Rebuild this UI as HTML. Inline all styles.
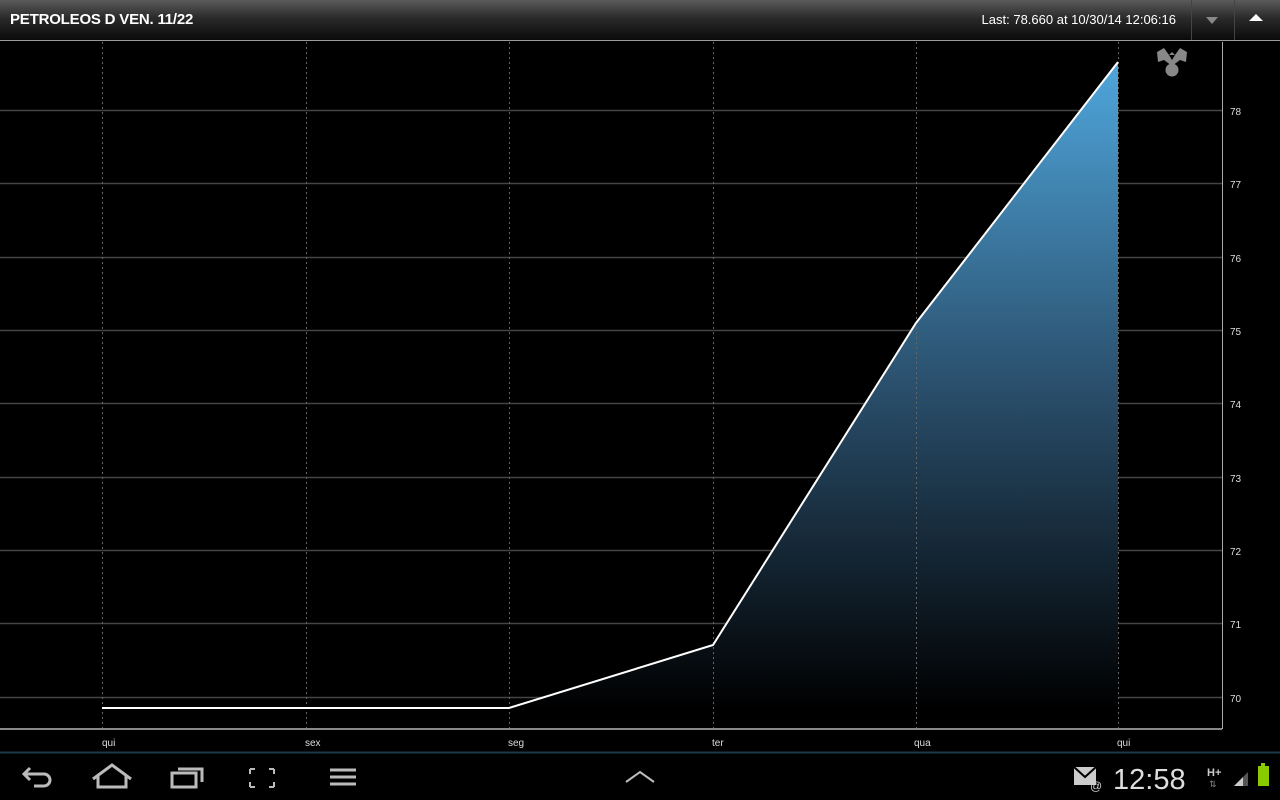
<!DOCTYPE html>
<html><head><style>
body{margin:0;width:1280px;height:800px;background:#000;overflow:hidden;font-family:"Liberation Sans",sans-serif;}
.hdr{position:absolute;left:0;top:0;width:1280px;height:40px;background:linear-gradient(#5a5a5a,#2a2a2a 45%,#0a0a0a);border-bottom:1px solid #9a9a9a;}
.t{position:absolute;left:10px;top:11px;color:#fff;font-size:15px;font-weight:bold;letter-spacing:-0.2px}
.l{position:absolute;right:104px;top:12px;color:#fff;font-size:13px}
.sep{position:absolute;top:0;width:1px;height:40px;background:#444}
</style></head><body>
<div class="hdr"><div class="t">PETROLEOS D VEN. 11/22</div><div class="l">Last: 78.660 at 10/30/14 12:06:16</div>
<div class="sep" style="left:1191px"></div><div class="sep" style="left:1234px"></div>
<svg style="position:absolute;left:1204px;top:15px" width="16" height="10"><path d="M2 2h12l-6 7z" fill="#888"/></svg>
<svg style="position:absolute;left:1248px;top:13px" width="16" height="10"><path d="M1 8h14l-7-7z" fill="#fff"/></svg>
</div>
<svg style="position:absolute;left:0;top:41px" width="1280" height="759" viewBox="0 41 1280 759">
<defs><linearGradient id="g" gradientUnits="userSpaceOnUse" x1="0" y1="62" x2="0" y2="710"><stop offset="0" stop-color="#4fa6dc"/><stop offset="0.5" stop-color="#2a4f6c"/><stop offset="1" stop-color="#000"/></linearGradient></defs>
<g stroke="#444" stroke-width="1.5">
<line x1="0" y1="110.5" x2="1222" y2="110.5"/><line x1="0" y1="183.5" x2="1222" y2="183.5"/><line x1="0" y1="257.5" x2="1222" y2="257.5"/><line x1="0" y1="330.5" x2="1222" y2="330.5"/><line x1="0" y1="403.5" x2="1222" y2="403.5"/><line x1="0" y1="477.5" x2="1222" y2="477.5"/><line x1="0" y1="550.5" x2="1222" y2="550.5"/><line x1="0" y1="623.5" x2="1222" y2="623.5"/><line x1="0" y1="697.5" x2="1222" y2="697.5"/>
</g>
<path d="M509 708L713 645L916 323L1118 62L1118 729L509 729Z" fill="url(#g)"/>
<g stroke="#666" stroke-dasharray="2,3">
<line x1="102.5" y1="42" x2="102.5" y2="729"/><line x1="306.5" y1="42" x2="306.5" y2="729"/><line x1="509.5" y1="42" x2="509.5" y2="729"/><line x1="713.5" y1="42" x2="713.5" y2="729"/><line x1="916.5" y1="42" x2="916.5" y2="729"/><line x1="1118.5" y1="42" x2="1118.5" y2="729"/>
</g>
<polyline points="102,708 509,708 713,645 916,323 1118,62" fill="none" stroke="#fff" stroke-width="2"/>
<line x1="0" y1="729" x2="1222" y2="729" stroke="#888" stroke-width="2"/>
<line x1="1222.5" y1="42" x2="1222.5" y2="729" stroke="#aaa"/>
<g fill="#ddd" font-size="10" font-family="Liberation Sans">
<text x="1230" y="115">78</text><text x="1230" y="188">77</text><text x="1230" y="262">76</text><text x="1230" y="335">75</text><text x="1230" y="408">74</text><text x="1230" y="482">73</text><text x="1230" y="555">72</text><text x="1230" y="628">71</text><text x="1230" y="702">70</text>
<text x="102" y="746">qui</text><text x="305" y="746">sex</text><text x="508" y="746">seg</text><text x="712" y="746">ter</text><text x="914" y="746">qua</text><text x="1117" y="746">qui</text>
</g>
<g fill="#888"><path d="M1157 52L1164 48L1169 55L1172 52L1175 55L1180 48L1187 52L1186 62L1180 60L1172 66L1164 60L1158 62Z"/><circle cx="1172" cy="70" r="6.5"/></g>
<path d="M1169 55L1172 60L1175 55Z" fill="#000"/>
<line x1="0" y1="752.5" x2="1280" y2="752.5" stroke="#1b3a4a" stroke-width="2"/>
<g fill="none" stroke="#bbb" stroke-width="3">
<path d="M30 768l-6 6 6 6M24 774h20a6 6 0 0 1 0 12h-10"/>
<path d="M93 779l19-14 19 14M98 776v11h28v-11"/>
<rect x="172" y="773" width="24" height="14"/><path d="M178 769h24v13"/>
<path d="M250 769h5M274 769h-5M250 769v5M274 769v5M250 787h5M274 787h-5M250 787v-5M274 787v-5" stroke-width="2"/>
<path d="M330 770h26M330 777h26M330 784h26"/>
<path d="M626 782l14-10 14 10" stroke-width="2"/>
</g>
<rect x="1074" y="767" width="22" height="18" fill="#ccc"/><path d="M1074 767l11 10 11-10" stroke="#000" stroke-width="2" fill="none"/>
<text x="1090" y="790" fill="#ccc" font-size="12">@</text>
<text x="1113" y="789" fill="#ddd" font-size="29" font-family="Liberation Sans">12:58</text>
<text x="1207" y="776" fill="#ccc" font-size="11" font-weight="bold">H+</text>
<text x="1209" y="787" fill="#888" font-size="9">⇅</text>
<path d="M1234 786l14-14v14z" fill="#555"/><path d="M1234 786l9-9v9z" fill="#ccc"/>
<rect x="1261" y="763" width="4" height="3" fill="#8c0"/><rect x="1258" y="766" width="11" height="20" fill="#8c0"/>
</svg>
</body></html>
